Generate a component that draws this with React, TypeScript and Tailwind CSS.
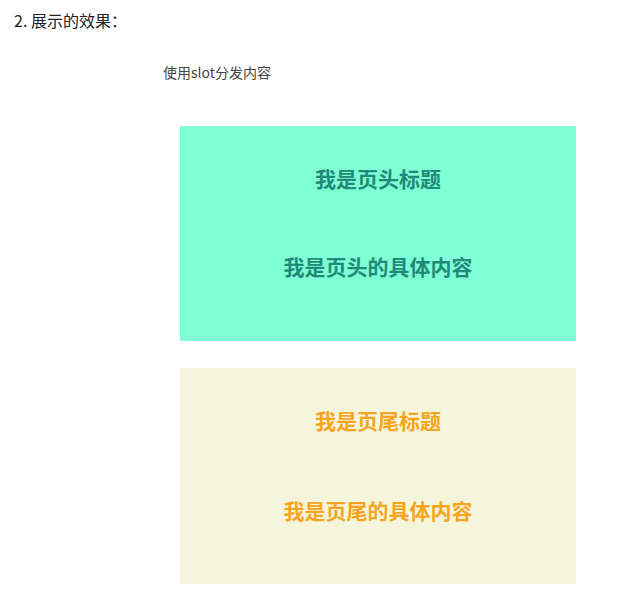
export default function App() {
  const font = { fontFamily: '"Noto Sans CJK SC", "Noto Sans", sans-serif' };

  return (
    <div className="min-h-[610px] bg-white px-[14px] pt-[8px]" style={font}>
      <p className="text-[16px] leading-[24px] text-[#222]">2. 展示的效果：</p>

      <div className="ml-[149px] mt-[30px]">
        <p className="text-[14px] leading-[20px] text-[#444]">使用slot分发内容</p>

        <div className="ml-[17px] mt-[44px] flex w-[396px] flex-col gap-[27px]">
          <div className="flex h-[215px] flex-col items-center bg-[#7fffd4] pt-[38px] text-[21px] font-bold leading-[28px] text-[#1f8a78]">
            <h3>我是页头标题</h3>
            <p className="mt-[60px]">我是页头的具体内容</p>
          </div>

          <div className="flex h-[216px] flex-col items-center bg-[#f5f5dc] pt-[38px] text-[21px] font-bold leading-[28px] text-[#f7a521]">
            <h3>我是页尾标题</h3>
            <p className="mt-[62px]">我是页尾的具体内容</p>
          </div>
        </div>
      </div>
    </div>
  );
}
